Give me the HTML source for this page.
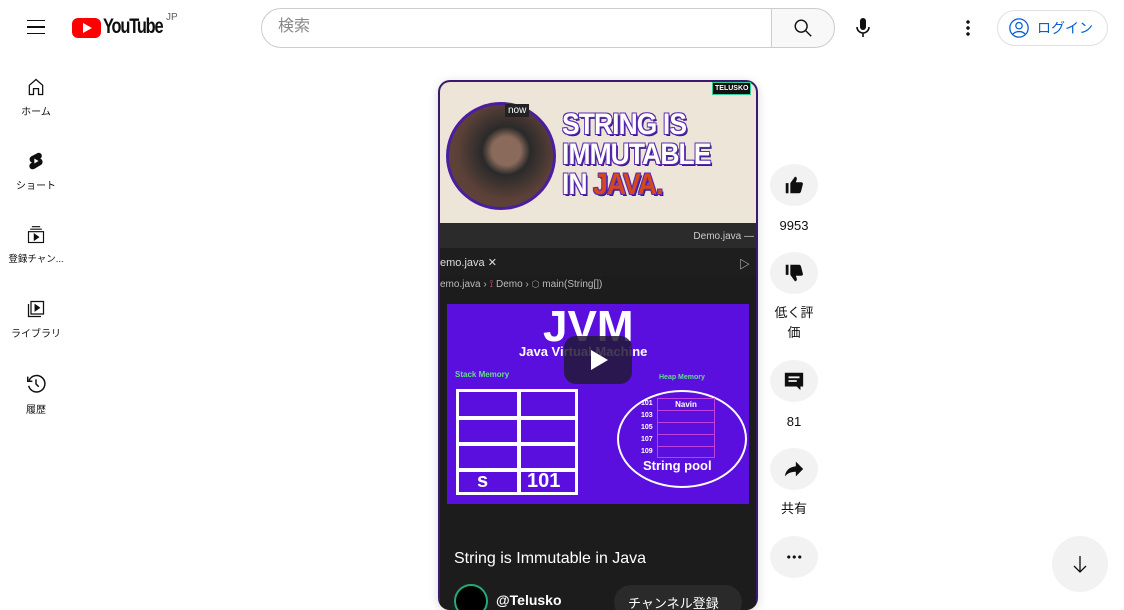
<!DOCTYPE html>
<html><head><meta charset="utf-8"><style>
*{box-sizing:border-box;margin:0;padding:0}
body{width:1124px;height:600px;overflow:hidden;background:#fff;font-family:"Liberation Sans","Noto Sans CJK JP",sans-serif;position:relative;color:#0f0f0f}
.abs{position:absolute}
.nav{position:absolute;left:0;width:72px;text-align:center;font-size:10px;color:#0f0f0f}
.nav svg{display:block;margin:0 auto 6px}
.btn{position:absolute;left:770px;width:48px;height:42px;border-radius:50%;background:#f2f2f2;display:flex;align-items:center;justify-content:center}
.lbl{position:absolute;left:764px;width:60px;text-align:center;font-size:13px;line-height:20px}
</style></head><body>
<!-- header -->
<div class="abs" style="left:27px;top:20px;width:18px;height:14px;border-top:1.5px solid #0f0f0f;border-bottom:1.5px solid #0f0f0f"><div style="margin-top:5px;height:1.5px;background:#0f0f0f"></div></div>
<div class="abs" style="left:72px;top:18px;width:29px;height:20px;background:#f00;border-radius:6px"></div>
<div class="abs" style="left:83px;top:23px;width:0;height:0;border-left:9px solid #fff;border-top:5px solid transparent;border-bottom:5px solid transparent"></div>
<div class="abs" style="left:103px;top:15px;font-size:21px;font-weight:bold;letter-spacing:-1.5px;transform:scaleX(0.78);transform-origin:left">YouTube</div>
<div class="abs" style="left:166px;top:12px;font-size:10px;color:#606060">JP</div>
<div class="abs" style="left:261px;top:8px;width:511px;height:40px;border:1px solid #ccc;border-radius:20px 0 0 20px;font-size:16px;color:#888;padding:8px 0 0 16px;line-height:20px">検索</div>
<div class="abs" style="left:771px;top:8px;width:64px;height:40px;border:1px solid #ccc;border-radius:0 20px 20px 0;background:#f8f8f8"></div>
<svg class="abs" style="left:792px;top:17px" width="22" height="22" viewBox="0 0 24 24"><circle cx="10" cy="10" r="6.5" fill="none" stroke="#0f0f0f" stroke-width="1.5"/><path d="M15 15l6 6" stroke="#0f0f0f" stroke-width="1.5"/></svg>
<svg class="abs" style="left:853px;top:16px" width="20" height="24" viewBox="0 0 20 24"><rect x="7" y="2" width="6" height="12" rx="3" fill="#0f0f0f"/><path d="M4 11a6 6 0 0 0 12 0M10 17v4" stroke="#0f0f0f" stroke-width="1.6" fill="none"/></svg>
<div class="abs" style="left:966px;top:19px;width:4px;height:18px;background:radial-gradient(circle,#0f0f0f 1.5px,transparent 2px) 0 0/4px 6px"></div>
<div class="abs" style="left:997px;top:10px;width:111px;height:36px;border:1px solid #e0e0e0;border-radius:18px"></div>
<svg class="abs" style="left:1008px;top:17px" width="22" height="22" viewBox="0 0 24 24" fill="none" stroke="#065fd4" stroke-width="1.4"><circle cx="12" cy="12" r="10"/><circle cx="12" cy="9.5" r="3.5"/><path d="M5.5 18.5c3-3.5 10-3.5 13 0"/></svg>
<div class="abs" style="left:1037px;top:18px;font-size:14px;color:#065fd4">ログイン</div>
<!-- sidebar -->
<div class="nav" style="top:77px"><svg width="20" height="20" viewBox="0 0 24 24" fill="none" stroke="#0f0f0f" stroke-width="1.5"><path d="M4 10l8-7 8 7v11h-5v-7H9v7H4z"/></svg>ホーム</div>
<div class="nav" style="top:151px"><svg width="20" height="20" viewBox="0 0 24 24"><path d="M17 2.5c2 1 2.6 3.6 1.3 5.6l-1.2 1.1c1.7.6 2.8 2.2 2.8 4 0 1.4-.7 2.7-1.9 3.5L10 21.5c-2 1-4.5.3-5.5-1.6-1-2-.3-4.3 1.6-5.4l1-.6C5.4 13.3 4.3 11.7 4.3 9.9c0-1.5.8-2.8 2-3.5L14 2.4c1-.5 2-.4 3 .1z" fill="#0f0f0f"/><path d="M10 9v6l5-3z" fill="#fff"/></svg>ショート</div>
<div class="nav" style="top:225px;font-size:9.5px"><svg width="22" height="20" viewBox="0 0 24 24" fill="none" stroke="#0f0f0f" stroke-width="1.4"><path d="M7 2h10M5 5h14"/><rect x="3" y="8" width="18" height="13"/><path d="M10 11v7l5-3.5z" fill="#0f0f0f"/></svg>登録チャン...</div>
<div class="nav" style="top:299px"><svg width="20" height="20" viewBox="0 0 24 24" fill="none" stroke="#0f0f0f" stroke-width="1.5"><path d="M3 6v15h15"/><rect x="6" y="3" width="15" height="15"/><path d="M11 7v7l5-3.5z" fill="#0f0f0f"/></svg>ライブラリ</div>
<div class="nav" style="top:373px"><svg width="22" height="22" viewBox="0 0 24 24" fill="none" stroke="#0f0f0f" stroke-width="1.6"><path d="M4.5 8A9 9 0 1 1 4 14"/><path d="M3 4v5h5"/><path d="M12 7v5l3 3"/></svg>履歴</div>
<!-- video -->
<div class="abs" style="left:438px;top:80px;width:320px;height:530px;border-radius:12px;background:#3b1a6e;box-shadow:0 2px 10px rgba(0,0,0,.15);overflow:hidden">
 <div class="abs" style="left:2px;top:2px;width:316px;height:141px;background:#ece5d8;border-radius:10px 10px 0 0"></div>
 <div class="abs" style="left:8px;top:22px;width:110px;height:108px;border-radius:50%;background:radial-gradient(circle at 55% 45%,#8a6a5a 0 18%,#2a2a2a 30%,#5a4038 60%,#6a4a3a);border:3px solid #4b1ea0"></div>
 <div class="abs" style="left:67px;top:24px;background:#222;color:#fff;font-size:10px;padding:1px 3px">now</div>
 <div class="abs" style="left:274px;top:2px;background:#111;color:#fff;font-size:7px;font-weight:bold;padding:2px 2px;border:1px solid #3c9">TELUSKO</div>
 <div class="abs" style="left:124px;top:30px;font-size:30px;line-height:30px;font-weight:bold;color:#fff;letter-spacing:-1px;transform:scaleX(.88);transform-origin:left;text-shadow:1px 1px 0 #5a2bb0,-1px -1px 0 #5a2bb0,1px -1px 0 #5a2bb0,-1px 1px 0 #5a2bb0,2px 2px 0 #3a1a80">STRING IS<br>IMMUTABLE<br>IN <span style="color:#d8471c">JAVA.</span></div>
 <div class="abs" style="left:2px;top:143px;width:316px;height:25px;background:#2b2b2b;color:#ccc;font-size:10px;text-align:right;padding:8px 2px 0 0">Demo.java —</div>
 <div class="abs" style="left:2px;top:168px;width:316px;height:28px;background:#1e1e1e;color:#ddd;font-size:11px;padding:8px 0 0 0">emo.java ✕<span style="float:right;margin-right:6px">▷</span></div>
 <div class="abs" style="left:2px;top:196px;width:316px;height:364px;background:#1c1c1c;color:#bbb;font-size:10px;padding:3px 0 0 0">emo.java › <span style="color:#d49">⟟</span> Demo › ⬡ main(String[])</div>
 <div class="abs" style="left:9px;top:224px;width:302px;height:200px;background:#5a0fdf;color:#fff">
  <div class="abs" style="left:96px;top:-2px;font-size:44px;font-weight:bold">JVM</div>
  <div class="abs" style="left:72px;top:40px;font-size:13px;font-weight:bold">Java Virtual Machine</div>
  <div class="abs" style="left:8px;top:66px;font-size:8px;font-weight:bold;color:#5ee08a">Stack Memory</div>
  <div class="abs" style="left:212px;top:70px;font-size:7px;font-weight:bold;color:#5ee08a">Heap Memory</div>
  <div class="abs" style="left:9px;top:85px;width:122px;height:106px;border:3px solid #fff;background:linear-gradient(90deg,transparent 58px,#fff 58px,#fff 62px,transparent 62px),linear-gradient(transparent 24px,#fff 24px,#fff 28px,transparent 28px,transparent 50px,#fff 50px,#fff 54px,transparent 54px,transparent 76px,#fff 76px,#fff 80px,transparent 80px)"></div>
  <div class="abs" style="left:30px;top:166px;font-size:20px;font-weight:bold">s</div>
  <div class="abs" style="left:80px;top:166px;font-size:20px;font-weight:bold">101</div>
  <div class="abs" style="left:170px;top:86px;width:130px;height:98px;border:2px solid #fff;border-radius:50%"></div>
  <div class="abs" style="left:194px;top:94px;font-size:7px;font-weight:bold;line-height:12px">101<br>103<br>105<br>107<br>109</div>
  <div class="abs" style="left:210px;top:94px;width:58px;height:60px;border:1px solid #c040e0;background:repeating-linear-gradient(transparent 0 11px,#c040e0 11px 12px);font-size:8px;font-weight:bold;text-align:center;line-height:11px">Navin</div>
  <div class="abs" style="left:196px;top:154px;font-size:13px;font-weight:bold">String pool</div>
 </div>
 <div class="abs" style="left:126px;top:256px;width:68px;height:48px;border-radius:12px;background:rgba(35,25,55,.85)"></div>
 <div class="abs" style="left:153px;top:270px;width:0;height:0;border-left:17px solid #fff;border-top:10px solid transparent;border-bottom:10px solid transparent"></div>
 <div class="abs" style="left:16px;top:470px;font-size:16px;color:#fff">String is Immutable in Java</div>
 <div class="abs" style="left:16px;top:504px;width:34px;height:34px;border-radius:50%;background:#000;border:2px solid #2a7"></div>
 <div class="abs" style="left:58px;top:512px;font-size:14px;font-weight:bold;color:#fff">@Telusko</div>
 <div class="abs" style="left:176px;top:505px;width:128px;height:34px;border-radius:17px;background:#2a2a2a;color:#fff;font-size:13px;padding:8px 0 0 14px">チャンネル登録</div>
</div>
<!-- actions -->
<div class="btn" style="top:164px"><svg width="22" height="22" viewBox="0 0 24 24" fill="#0f0f0f"><path d="M3 10h3v11H3zM8 10l5-7c1.5 0 2.5 1 2 3l-1 3h6c1 0 2 1 1.7 2l-2 8c-.3 1-1 2-2 2H8z"/></svg></div>
<div class="lbl" style="top:216px">9953</div>
<div class="btn" style="top:252px"><svg width="22" height="22" viewBox="0 0 24 24" fill="#0f0f0f" style="transform:rotate(180deg)"><path d="M3 10h3v11H3zM8 10l5-7c1.5 0 2.5 1 2 3l-1 3h6c1 0 2 1 1.7 2l-2 8c-.3 1-1 2-2 2H8z" transform="scale(-1,1) translate(-24,0)"/></svg></div>
<div class="lbl" style="top:303px;line-height:20px">低く評<br>価</div>
<div class="btn" style="top:360px"><svg width="22" height="22" viewBox="0 0 24 24" fill="#0f0f0f"><path d="M2 3h20v15h-3v4l-4-4H2z"/><path d="M6 8h12M6 12h9" stroke="#f2f2f2" stroke-width="2"/></svg></div>
<div class="lbl" style="top:412px">81</div>
<div class="btn" style="top:448px"><svg width="22" height="22" viewBox="0 0 24 24" fill="#0f0f0f"><path d="M14 4l8 8-8 8v-5c-6 0-9 2-12 5 1-6 4-10 12-11z"/></svg></div>
<div class="lbl" style="top:499px">共有</div>
<div class="btn" style="top:536px"><div style="width:16px;height:4px;background:radial-gradient(circle,#0f0f0f 1.4px,transparent 1.8px) 0 0/5.5px 4px"></div></div>
<div class="abs" style="left:1052px;top:536px;width:56px;height:56px;border-radius:50%;background:#f2f2f2"></div>
<svg class="abs" style="left:1068px;top:552px" width="24" height="24" viewBox="0 0 24 24" fill="none" stroke="#0f0f0f" stroke-width="1.3"><path d="M12 4v16M6 14l6 6 6-6"/></svg>
</body></html>
